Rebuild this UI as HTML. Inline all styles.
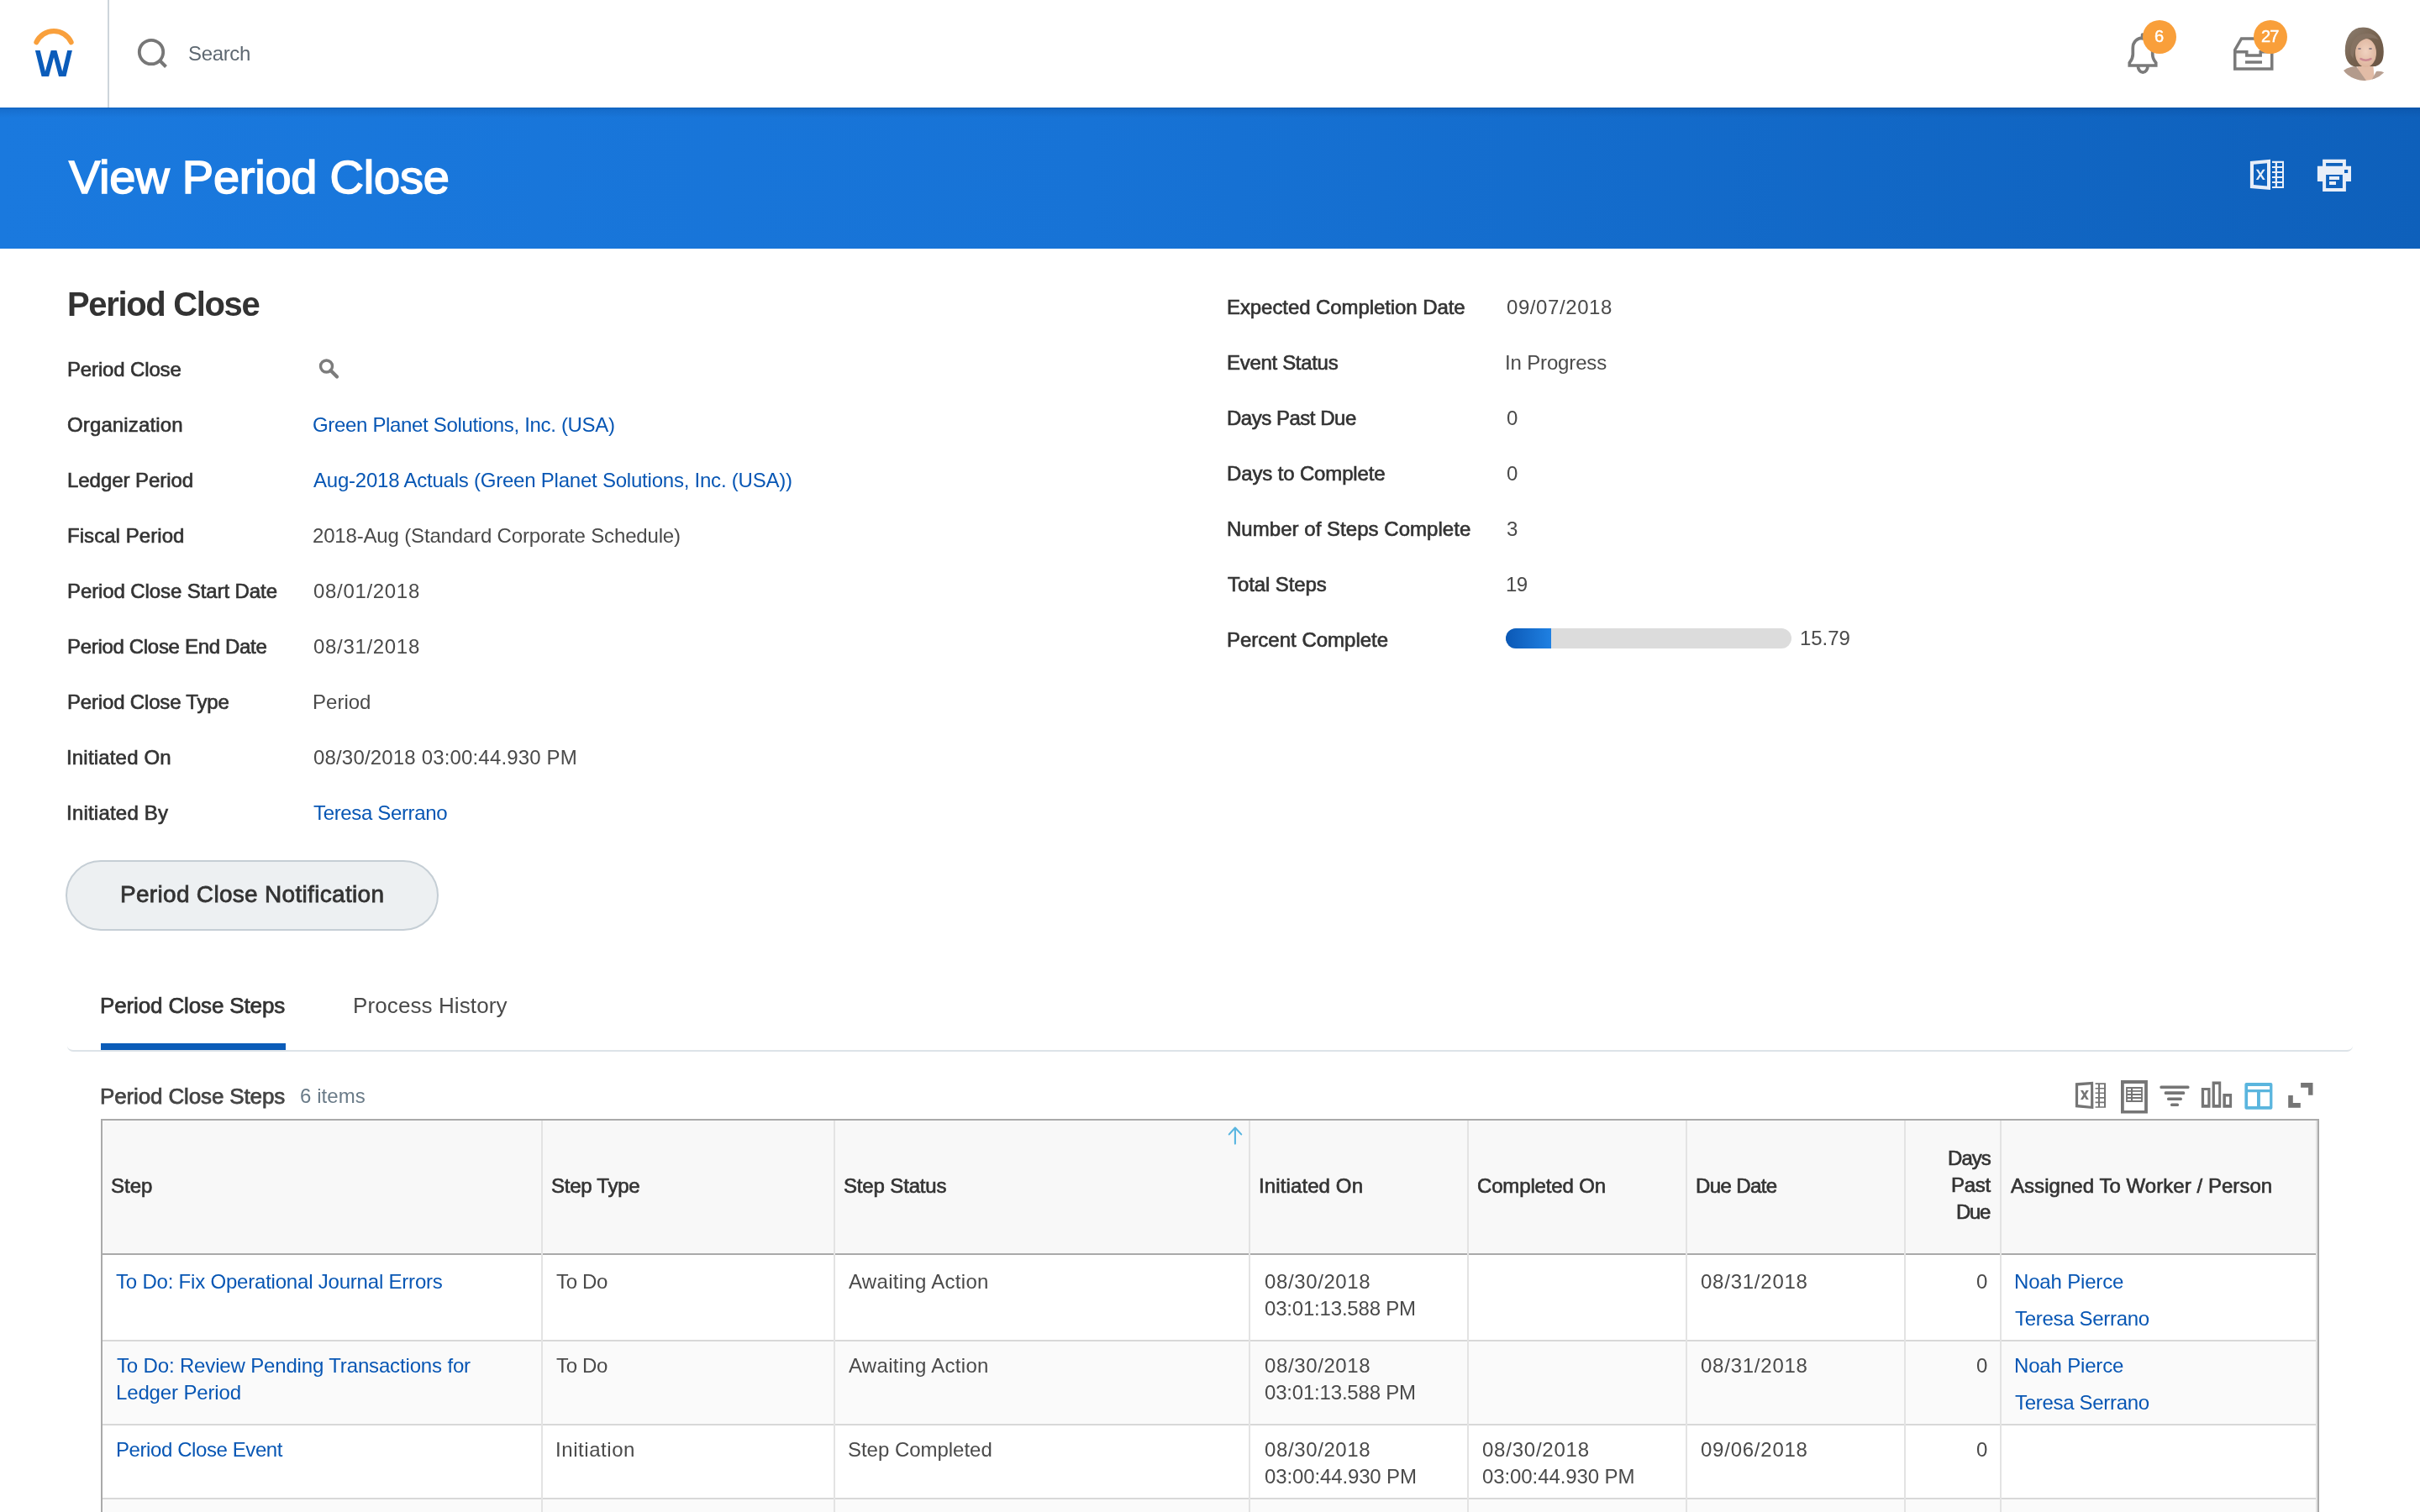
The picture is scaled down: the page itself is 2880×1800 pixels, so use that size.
<!DOCTYPE html>
<html><head><meta charset="utf-8"><title>View Period Close</title>
<style>
html,body{margin:0;padding:0;}
body{width:2880px;height:1800px;position:relative;overflow:hidden;background:#fff;font-family:"Liberation Sans",sans-serif;}
.t{position:absolute;white-space:nowrap;will-change:transform;}
svg{position:absolute;}
</style></head><body>
<svg style="left:0;top:0" width="130" height="128" viewBox="0 0 130 128"><path d="M43.3 50.3 A22.75 22.75 0 0 1 84.7 50.3" fill="none" stroke="#f9a03c" stroke-width="6" stroke-linecap="round"/><path d="M41.9 60 L47.7 60 L53.9 85 L60.7 60 L67.4 60 L74.2 85 L80.2 60 L85.9 60 L78.5 91 L70 91 L64.05 68.3 L58.1 91 L49.6 91 Z" fill="#0b5cba"/></svg>
<div style="position:absolute;left:128px;top:0px;width:2px;height:128px;background:#cdd5db;"></div>
<svg style="left:160px;top:42px" width="44" height="44" viewBox="0 0 44 44"><circle cx="20" cy="20" r="14.2" fill="none" stroke="#777" stroke-width="3.8"/><path d="M30 30 L37.5 37.5" stroke="#777" stroke-width="4"/></svg>
<div class="t" style="left:223.60px;top:51.68px;font-size:24px;line-height:24px;color:#5e6871;letter-spacing:-0.339px;">Search</div>
<svg style="left:2528px;top:36px" width="48" height="56" viewBox="0 0 48 56"><path d="M22 9.2 C15 9.2 10.3 14 10.3 21 L10.3 28.5 C10.3 34 8.5 36 6.3 38.6 L6.3 42 L37.7 42 L37.7 38.6 C35.5 36 33.7 34 33.7 28.5 L33.7 21 C33.7 14 29 9.2 22 9.2 Z" fill="none" stroke="#7a7a7a" stroke-width="3.7"/><path d="M16.4 42.5 A5.8 7.6 0 0 0 28 42.5" fill="none" stroke="#7a7a7a" stroke-width="3.7"/><path d="M22 9.5 V5.5" fill="none" stroke="#7a7a7a" stroke-width="4.4" stroke-linecap="round"/></svg>
<svg style="left:2654px;top:40px" width="56" height="48" viewBox="0 0 56 48"><path d="M5.75 42 L5.75 19.5 L13.5 6 L42 6 L49.75 19.5 L49.75 42 Z" fill="none" stroke="#7a7a7a" stroke-width="3.5"/><path d="M5.75 21.8 L19.8 21.8 L19.8 26 L36.2 26 L36.2 21.8 L49.75 21.8" fill="none" stroke="#7a7a7a" stroke-width="3.5"/><path d="M18 34 L38 34" stroke="#7a7a7a" stroke-width="3.5"/></svg>
<div style="position:absolute;left:2550px;top:24px;width:40px;height:40px;background:#f99f3a;border-radius:50%;"></div>
<div style="position:absolute;left:2682px;top:24px;width:40px;height:40px;background:#f99f3a;border-radius:50%;"></div>
<div class="t" style="left:2564.45px;top:33.07px;font-size:20px;line-height:20px;color:#fff;-webkit-text-stroke:0.5px #fff;">6</div>
<div class="t" style="left:2690.75px;top:33.07px;font-size:20px;line-height:20px;color:#fff;letter-spacing:-0.823px;-webkit-text-stroke:0.5px #fff;">27</div>
<svg style="left:2782px;top:32px" width="64" height="64" viewBox="0 0 64 64"><defs><clipPath id="av"><circle cx="32" cy="32" r="32"/></clipPath><linearGradient id="hg" x1="0" y1="0" x2="1" y2="1"><stop offset="0" stop-color="#8d7f72"/><stop offset="0.5" stop-color="#76624f"/><stop offset="1" stop-color="#6a5544"/></linearGradient><radialGradient id="fg" cx="0.5" cy="0.45" r="0.6"><stop offset="0" stop-color="#f0d2c0"/><stop offset="1" stop-color="#dcb29a"/></radialGradient></defs><g clip-path="url(#av)"><path d="M24 42 L42 42 L44 64 L22 64 Z" fill="#e2bca6"/><path d="M0 64 L3 56 C8 50 15 47 22 47 L34 64 Z" fill="#b39b8c"/><path d="M64 64 L61 58 C57 54 51 52 46 53 L40 64 Z" fill="#b9a193"/><path d="M30 0.5 C17 0.5 8.5 12 8.8 29 C9 36 11 42 16 45.5 C19 47.5 22 48 25 47 L45 47 C50 45.5 53 42 54 37 C55.5 30 55 20 50.5 12 C46 5 39 0.5 30 0.5 Z" fill="url(#hg)"/><ellipse cx="33.5" cy="31" rx="12.5" ry="17" fill="url(#fg)"/><path d="M15.5 33 C14.5 21 20 9.5 32 8 C39 7 45 9.5 48.5 15 C41 12 33 13 27.5 17 C22.5 21 19.5 27 18.5 38 Z" fill="#857262"/><ellipse cx="26" cy="26" rx="2" ry="1.1" fill="#8a7a82"/><ellipse cx="39" cy="26" rx="2" ry="1.1" fill="#8a7a82"/><path d="M27.5 38 C30.5 40.3 36.5 40.3 39.5 38" stroke="#cc8a92" stroke-width="2.6" fill="none" stroke-linecap="round"/></g></svg>
<div style="position:absolute;left:0px;top:128px;width:2880px;height:168px;background:linear-gradient(90deg,#1a79de 0%,#1773d6 45%,#0e60bb 100%);"></div>
<div style="position:absolute;left:0px;top:128px;width:2880px;height:2px;background:rgba(0,50,120,0.22);"></div>
<div style="position:absolute;left:0px;top:130px;width:2880px;height:10px;background:linear-gradient(180deg,rgba(0,40,100,0.13),rgba(0,40,100,0));"></div>
<div class="t" style="left:81.50px;top:182.80px;font-size:56px;line-height:56px;color:#ffffff;letter-spacing:-0.230px;-webkit-text-stroke:1.6px #ffffff;">View Period Close</div>
<svg style="left:2670px;top:180px" width="140" height="56" viewBox="0 0 140 56" fill="#e8eef8"><path fill-rule="evenodd" d="M7.9 12.1 L32 9.8 L32 46 L7.9 43.9 Z M12 15.8 L12 40.1 L28 41.6 L28 14.3 Z"/><path d="M14.8 21.7 L17.5 21.7 L20.2 26 L22.9 21.7 L25.7 21.7 L21.6 27.8 L25.7 34 L22.9 34 L20.2 29.7 L17.5 34 L14.8 34 L18.8 27.8 Z"/><path d="M34 11.8 H48 V44.1 H34 V41.9 H37.7 V38 H34 V36 H37.7 V32 H34 V30 H37.7 V26 H34 V24 H37.7 V20.1 H34 V18.1 H37.7 V14.1 H34 Z M40 14.1 V18.1 H46 V14.1 Z M40 20.1 V24 H46 V20.1 Z M40 26 V30 H46 V26 Z M40 32 V36 H46 V32 Z M40 38 V41.9 H46 V38 Z" fill-rule="evenodd"/><path fill-rule="evenodd" d="M94.1 9.8 H121.9 V17.8 H128 V36 H121.9 V48 H94.1 V36 H87.9 V17.8 H94.1 Z M98.1 14.1 V17.8 H117.9 V14.1 Z M120 22 V26 H124.2 V22 Z M98.1 28 V43.9 H117.9 V28 Z"/><rect x="102" y="30" width="12" height="4"/><rect x="102" y="36" width="8" height="4"/></svg>
<div class="t" style="left:79.50px;top:342.14px;font-size:40px;line-height:40px;color:#333;font-weight:700;letter-spacing:-1.342px;">Period Close</div>
<div class="t" style="left:80.03px;top:428.18px;font-size:24px;line-height:24px;color:#333333;letter-spacing:-0.146px;-webkit-text-stroke:0.65px #333333;">Period Close</div>
<div class="t" style="left:80.03px;top:494.18px;font-size:24px;line-height:24px;color:#333333;letter-spacing:0.129px;-webkit-text-stroke:0.65px #333333;">Organization</div>
<div class="t" style="left:80.03px;top:560.18px;font-size:24px;line-height:24px;color:#333333;letter-spacing:-0.048px;-webkit-text-stroke:0.65px #333333;">Ledger Period</div>
<div class="t" style="left:80.03px;top:626.18px;font-size:24px;line-height:24px;color:#333333;letter-spacing:0.057px;-webkit-text-stroke:0.65px #333333;">Fiscal Period</div>
<div class="t" style="left:80.03px;top:692.18px;font-size:24px;line-height:24px;color:#333333;letter-spacing:-0.096px;-webkit-text-stroke:0.65px #333333;">Period Close Start Date</div>
<div class="t" style="left:80.03px;top:758.18px;font-size:24px;line-height:24px;color:#333333;letter-spacing:-0.317px;-webkit-text-stroke:0.65px #333333;">Period Close End Date</div>
<div class="t" style="left:80.03px;top:824.18px;font-size:24px;line-height:24px;color:#333333;letter-spacing:-0.175px;-webkit-text-stroke:0.65px #333333;">Period Close Type</div>
<div class="t" style="left:79.03px;top:890.18px;font-size:24px;line-height:24px;color:#333333;letter-spacing:0.178px;-webkit-text-stroke:0.65px #333333;">Initiated On</div>
<div class="t" style="left:79.03px;top:956.18px;font-size:24px;line-height:24px;color:#333333;letter-spacing:0.211px;-webkit-text-stroke:0.65px #333333;">Initiated By</div>
<div class="t" style="left:371.70px;top:494.18px;font-size:24px;line-height:24px;color:#0756b4;letter-spacing:-0.332px;">Green Planet Solutions, Inc. (USA)</div>
<div class="t" style="left:372.70px;top:560.18px;font-size:24px;line-height:24px;color:#0756b4;letter-spacing:-0.224px;">Aug-2018 Actuals (Green Planet Solutions, Inc. (USA))</div>
<div class="t" style="left:371.70px;top:626.18px;font-size:24px;line-height:24px;color:#4a4a4a;letter-spacing:-0.170px;">2018-Aug (Standard Corporate Schedule)</div>
<div class="t" style="left:372.70px;top:692.18px;font-size:24px;line-height:24px;color:#4a4a4a;letter-spacing:0.681px;">08/01/2018</div>
<div class="t" style="left:372.70px;top:758.18px;font-size:24px;line-height:24px;color:#4a4a4a;letter-spacing:0.681px;">08/31/2018</div>
<div class="t" style="left:371.70px;top:824.18px;font-size:24px;line-height:24px;color:#4a4a4a;letter-spacing:0.015px;">Period</div>
<div class="t" style="left:372.70px;top:890.18px;font-size:24px;line-height:24px;color:#4a4a4a;letter-spacing:0.168px;">08/30/2018 03:00:44.930 PM</div>
<div class="t" style="left:372.70px;top:956.18px;font-size:24px;line-height:24px;color:#0756b4;letter-spacing:-0.349px;">Teresa Serrano</div>
<svg style="left:376px;top:424px" width="32" height="32" viewBox="0 0 32 32"><circle cx="12.5" cy="12" r="7" fill="none" stroke="#7c7c7c" stroke-width="3.4"/><path d="M17.5 17 L25 24.5" stroke="#7c7c7c" stroke-width="4.2" stroke-linecap="round"/></svg>
<div class="t" style="left:1460.23px;top:353.98px;font-size:24px;line-height:24px;color:#333333;letter-spacing:-0.082px;-webkit-text-stroke:0.65px #333333;">Expected Completion Date</div>
<div class="t" style="left:1793.00px;top:353.98px;font-size:24px;line-height:24px;color:#4a4a4a;letter-spacing:0.581px;">09/07/2018</div>
<div class="t" style="left:1460.23px;top:420.08px;font-size:24px;line-height:24px;color:#333333;letter-spacing:-0.312px;-webkit-text-stroke:0.65px #333333;">Event Status</div>
<div class="t" style="left:1791.00px;top:420.08px;font-size:24px;line-height:24px;color:#4a4a4a;letter-spacing:-0.152px;">In Progress</div>
<div class="t" style="left:1460.23px;top:485.98px;font-size:24px;line-height:24px;color:#333333;letter-spacing:-0.481px;-webkit-text-stroke:0.65px #333333;">Days Past Due</div>
<div class="t" style="left:1793.00px;top:485.98px;font-size:24px;line-height:24px;color:#4a4a4a;">0</div>
<div class="t" style="left:1460.23px;top:552.08px;font-size:24px;line-height:24px;color:#333333;letter-spacing:-0.143px;-webkit-text-stroke:0.65px #333333;">Days to Complete</div>
<div class="t" style="left:1793.00px;top:552.08px;font-size:24px;line-height:24px;color:#4a4a4a;">0</div>
<div class="t" style="left:1460.23px;top:618.18px;font-size:24px;line-height:24px;color:#333333;letter-spacing:0.036px;-webkit-text-stroke:0.65px #333333;">Number of Steps Complete</div>
<div class="t" style="left:1793.00px;top:618.18px;font-size:24px;line-height:24px;color:#4a4a4a;">3</div>
<div class="t" style="left:1461.23px;top:683.98px;font-size:24px;line-height:24px;color:#333333;letter-spacing:-0.088px;-webkit-text-stroke:0.65px #333333;">Total Steps</div>
<div class="t" style="left:1792.00px;top:683.98px;font-size:24px;line-height:24px;color:#4a4a4a;letter-spacing:-0.548px;">19</div>
<div class="t" style="left:1460.23px;top:750.28px;font-size:24px;line-height:24px;color:#333333;-webkit-text-stroke:0.65px #333333;">Percent Complete</div>
<div style="position:absolute;left:1792px;top:748px;width:339.5px;height:24px;background:#dcdcdc;border-radius:12px;"></div>
<div style="position:absolute;left:1792px;top:748px;width:54px;height:24px;background:linear-gradient(90deg,#0b58b5,#1f80e2);border-radius:12px 0 0 12px;"></div>
<div class="t" style="left:2141.60px;top:748.28px;font-size:24px;line-height:24px;color:#4a4a4a;letter-spacing:-0.078px;">15.79</div>
<div style="position:absolute;left:78px;top:1024px;width:444px;height:84px;background:#edf0f2;border:2px solid #c5ced5;border-radius:42px;box-sizing:border-box;"></div>
<div class="t" style="left:143.00px;top:1051.00px;font-size:28px;line-height:28px;color:#333;letter-spacing:0.308px;-webkit-text-stroke:0.8px #333;">Period Close Notification</div>
<div class="t" style="left:119.38px;top:1183.99px;font-size:26px;line-height:26px;color:#333;letter-spacing:-0.136px;-webkit-text-stroke:0.75px #333;">Period Close Steps</div>
<div class="t" style="left:419.80px;top:1183.99px;font-size:26px;line-height:26px;color:#4a4a4a;letter-spacing:0.104px;">Process History</div>
<div style="position:absolute;left:80px;top:1240px;width:2720px;height:12px;background:transparent;box-sizing:border-box;border-bottom:2px solid #dde3e8;border-radius:0 0 7px 7px;"></div>
<div style="position:absolute;left:120px;top:1242px;width:220px;height:8px;background:#0b5cb8;"></div>
<div class="t" style="left:119.38px;top:1291.79px;font-size:26px;line-height:26px;color:#444;letter-spacing:-0.136px;-webkit-text-stroke:0.75px #444;">Period Close Steps</div>
<div class="t" style="left:356.90px;top:1293.48px;font-size:24px;line-height:24px;color:#6a7b88;letter-spacing:0.074px;">6 items</div>
<svg style="left:2460px;top:1280px" width="300" height="50" viewBox="0 0 300 50" fill="#757575"><path fill-rule="evenodd" d="M9.9 9.3 L31.1 7.8 L31.4 40 L9.9 38.3 Z M13.1 12.6 L13.1 35 L28.1 36.7 L28.1 11.2 Z"/><path d="M15.9 17.9 L19 17.9 L20.85 21.3 L22.7 17.9 L25.8 17.9 L22.4 23.5 L25.8 29.1 L22.7 29.1 L20.85 25.7 L19 29.1 L15.9 29.1 L19.3 23.5 Z"/><path fill-rule="evenodd" d="M33.6 9.3 H46 V38.7 H33.6 V37.2 H37 V33.3 H33.6 V31.6 H37 V27.8 H33.6 V26.1 H37 V22.1 H33.6 V20.5 H37 V16.5 H33.6 V14.9 H37 V10.9 H33.6 Z M39 10.9 V14.9 H44 V10.9 Z M39 16.5 V20.5 H44 V16.5 Z M39 22.1 V26.1 H44 V22.1 Z M39 27.8 V31.6 H44 V27.8 Z M39 33.3 V37.2 H44 V33.3 Z"/><path fill-rule="evenodd" d="M64 6 H95.9 V45.6 H64 Z M67.8 9.9 V42 H92.1 V9.9 Z"/><path fill-rule="evenodd" d="M70.1 14 H89.9 V31.9 H70.1 Z M71.9 15.9 V18 H76 V15.9 Z M78 15.9 V18 H88.1 V15.9 Z M71.9 19.8 V22 H76 V19.8 Z M78 19.8 V22 H88.1 V19.8 Z M71.9 23.9 V26 H76 V23.9 Z M78 23.9 V26 H88.1 V23.9 Z M71.9 27.9 V30.1 H76 V27.9 Z M78 27.9 V30.1 H88.1 V27.9 Z"/><rect x="110.4" y="12.4" width="35.1" height="3.5" rx="1.5"/><rect x="115.7" y="19.3" width="24.5" height="3.6" rx="1.5"/><rect x="119" y="26.4" width="17.9" height="3.5" rx="1.5"/><rect x="123" y="33.6" width="10" height="3.3" rx="1.5"/><path fill-rule="evenodd" d="M159.8 14.9 H170.5 V38.7 H159.8 Z M163.1 17.9 V35 H167.3 V17.9 Z"/><path fill-rule="evenodd" d="M172.6 7.6 H183.2 V38.7 H172.6 Z M175.9 10.9 V35 H180.2 V10.9 Z"/><path fill-rule="evenodd" d="M185.4 22.1 H196.1 V38.7 H185.4 Z M188.9 25.5 V35 H193.1 V25.5 Z"/><path fill="#5ab5de" fill-rule="evenodd" d="M213.4 8.9 H242.4 Q244.4 8.9 244.4 10.9 V38.7 Q244.4 40.7 242.4 40.7 H213.4 Q211.4 40.7 211.4 38.7 V10.9 Q211.4 8.9 213.4 8.9 Z M215.1 12.9 V16.9 H241.1 V12.9 Z M215.1 20.2 V36.9 H226 V20.2 Z M229.9 20.2 V36.9 H241.1 V20.2 Z"/><path d="M278.1 9.1 H292.5 V23.8 H287.1 V14.7 H278.1 Z"/><path d="M263.2 23.9 H268.8 V33.1 H277.8 V38.7 H263.2 Z"/></svg>
<div style="position:absolute;left:120px;top:1332px;width:2639.5px;height:468px;background:#fff;"></div>
<div style="position:absolute;left:122px;top:1334px;width:2635.5px;height:158px;background:#f8f8f8;"></div>
<div style="position:absolute;left:122px;top:1596.5px;width:2635.5px;height:98px;background:#fafafa;"></div>
<div style="position:absolute;left:122px;top:1784.5px;width:2635.5px;height:20px;background:#fafafa;"></div>
<div style="position:absolute;left:120px;top:1332px;width:2639.5px;height:2px;background:#aaaaaa;"></div>
<div style="position:absolute;left:120px;top:1332px;width:2px;height:468px;background:#aaaaaa;"></div>
<div style="position:absolute;left:2757.5px;top:1332px;width:2px;height:468px;background:#aaaaaa;"></div>
<div style="position:absolute;left:120px;top:1492px;width:2639.5px;height:2px;background:#aaaaaa;"></div>
<div style="position:absolute;left:122px;top:1594.5px;width:2635.5px;height:2px;background:#d8d8d8;"></div>
<div style="position:absolute;left:122px;top:1694.5px;width:2635.5px;height:2px;background:#d8d8d8;"></div>
<div style="position:absolute;left:122px;top:1782.5px;width:2635.5px;height:2px;background:#d8d8d8;"></div>
<div style="position:absolute;left:644px;top:1334px;width:2px;height:468px;background:#e3e3e3;"></div>
<div style="position:absolute;left:992px;top:1334px;width:2px;height:468px;background:#e3e3e3;"></div>
<div style="position:absolute;left:1486px;top:1334px;width:2px;height:468px;background:#e3e3e3;"></div>
<div style="position:absolute;left:1746px;top:1334px;width:2px;height:468px;background:#e3e3e3;"></div>
<div style="position:absolute;left:2006px;top:1334px;width:2px;height:468px;background:#e3e3e3;"></div>
<div style="position:absolute;left:2266px;top:1334px;width:2px;height:468px;background:#e3e3e3;"></div>
<div style="position:absolute;left:2380px;top:1334px;width:2px;height:468px;background:#e3e3e3;"></div>
<div style="position:absolute;left:2756px;top:1334px;width:2px;height:468px;background:#e3e3e3;"></div>
<svg style="left:1460px;top:1338px" width="20" height="26" viewBox="0 0 20 26"><path d="M9.9 5 V23.6 M2.8 12.4 L9.9 4.5 L17.2 12.4" fill="none" stroke="#58b5e0" stroke-width="2.1" stroke-linecap="round" stroke-linejoin="round"/></svg>
<div class="t" style="left:132.12px;top:1399.68px;font-size:24px;line-height:24px;color:#333;-webkit-text-stroke:0.65px #333;">Step</div>
<div class="t" style="left:656.23px;top:1399.68px;font-size:24px;line-height:24px;color:#333;letter-spacing:-0.259px;-webkit-text-stroke:0.65px #333;">Step Type</div>
<div class="t" style="left:1004.33px;top:1399.68px;font-size:24px;line-height:24px;color:#333;letter-spacing:-0.153px;-webkit-text-stroke:0.65px #333;">Step Status</div>
<div class="t" style="left:1497.73px;top:1399.68px;font-size:24px;line-height:24px;color:#333;letter-spacing:0.114px;-webkit-text-stroke:0.65px #333;">Initiated On</div>
<div class="t" style="left:1758.33px;top:1399.68px;font-size:24px;line-height:24px;color:#333;letter-spacing:-0.159px;-webkit-text-stroke:0.65px #333;">Completed On</div>
<div class="t" style="left:2018.12px;top:1399.68px;font-size:24px;line-height:24px;color:#333;letter-spacing:-0.599px;-webkit-text-stroke:0.65px #333;">Due Date</div>
<div class="t" style="left:2392.92px;top:1399.68px;font-size:24px;line-height:24px;color:#333;letter-spacing:0.048px;-webkit-text-stroke:0.65px #333;">Assigned To Worker / Person</div>
<div class="t" style="left:2317.52px;top:1367.28px;font-size:24px;line-height:24px;color:#333;letter-spacing:-0.943px;-webkit-text-stroke:0.65px #333;">Days</div>
<div class="t" style="left:2321.82px;top:1399.18px;font-size:24px;line-height:24px;color:#333;letter-spacing:-0.268px;-webkit-text-stroke:0.65px #333;">Past</div>
<div class="t" style="left:2328.42px;top:1430.98px;font-size:24px;line-height:24px;color:#333;letter-spacing:-1.365px;-webkit-text-stroke:0.65px #333;">Due</div>
<div class="t" style="left:138.20px;top:1513.68px;font-size:24px;line-height:24px;color:#0756b4;letter-spacing:-0.204px;">To Do: Fix Operational Journal Errors</div>
<div class="t" style="left:662.30px;top:1513.68px;font-size:24px;line-height:24px;color:#4a4a4a;letter-spacing:-0.337px;">To Do</div>
<div class="t" style="left:1010.10px;top:1513.68px;font-size:24px;line-height:24px;color:#4a4a4a;letter-spacing:0.293px;">Awaiting Action</div>
<div class="t" style="left:1504.80px;top:1513.68px;font-size:24px;line-height:24px;color:#4a4a4a;letter-spacing:0.614px;">08/30/2018</div>
<div class="t" style="left:1504.80px;top:1545.68px;font-size:24px;line-height:24px;color:#4a4a4a;letter-spacing:-0.193px;">03:01:13.588 PM</div>
<div class="t" style="left:2024.40px;top:1513.68px;font-size:24px;line-height:24px;color:#4a4a4a;letter-spacing:0.759px;">08/31/2018</div>
<div class="t" style="left:2351.50px;top:1513.68px;font-size:24px;line-height:24px;color:#4a4a4a;">0</div>
<div class="t" style="left:2397.00px;top:1513.68px;font-size:24px;line-height:24px;color:#0756b4;letter-spacing:-0.172px;">Noah Pierce</div>
<div class="t" style="left:2398.00px;top:1558.18px;font-size:24px;line-height:24px;color:#0756b4;letter-spacing:-0.303px;">Teresa Serrano</div>
<div class="t" style="left:139.10px;top:1613.68px;font-size:24px;line-height:24px;color:#0756b4;letter-spacing:-0.157px;">To Do: Review Pending Transactions for</div>
<div class="t" style="left:138.10px;top:1645.68px;font-size:24px;line-height:24px;color:#0756b4;letter-spacing:-0.144px;">Ledger Period</div>
<div class="t" style="left:662.30px;top:1613.68px;font-size:24px;line-height:24px;color:#4a4a4a;letter-spacing:-0.337px;">To Do</div>
<div class="t" style="left:1010.10px;top:1613.68px;font-size:24px;line-height:24px;color:#4a4a4a;letter-spacing:0.293px;">Awaiting Action</div>
<div class="t" style="left:1504.80px;top:1613.68px;font-size:24px;line-height:24px;color:#4a4a4a;letter-spacing:0.614px;">08/30/2018</div>
<div class="t" style="left:1504.80px;top:1645.68px;font-size:24px;line-height:24px;color:#4a4a4a;letter-spacing:-0.193px;">03:01:13.588 PM</div>
<div class="t" style="left:2024.40px;top:1613.68px;font-size:24px;line-height:24px;color:#4a4a4a;letter-spacing:0.759px;">08/31/2018</div>
<div class="t" style="left:2351.50px;top:1613.68px;font-size:24px;line-height:24px;color:#4a4a4a;">0</div>
<div class="t" style="left:2397.00px;top:1613.68px;font-size:24px;line-height:24px;color:#0756b4;letter-spacing:-0.172px;">Noah Pierce</div>
<div class="t" style="left:2398.00px;top:1658.18px;font-size:24px;line-height:24px;color:#0756b4;letter-spacing:-0.303px;">Teresa Serrano</div>
<div class="t" style="left:138.10px;top:1714.08px;font-size:24px;line-height:24px;color:#0756b4;letter-spacing:-0.410px;">Period Close Event</div>
<div class="t" style="left:661.10px;top:1714.08px;font-size:24px;line-height:24px;color:#4a4a4a;letter-spacing:0.562px;">Initiation</div>
<div class="t" style="left:1009.10px;top:1714.08px;font-size:24px;line-height:24px;color:#4a4a4a;letter-spacing:-0.027px;">Step Completed</div>
<div class="t" style="left:1504.80px;top:1714.08px;font-size:24px;line-height:24px;color:#4a4a4a;letter-spacing:0.614px;">08/30/2018</div>
<div class="t" style="left:1504.80px;top:1746.08px;font-size:24px;line-height:24px;color:#4a4a4a;letter-spacing:-0.129px;">03:00:44.930 PM</div>
<div class="t" style="left:1764.00px;top:1714.08px;font-size:24px;line-height:24px;color:#4a4a4a;letter-spacing:0.770px;">08/30/2018</div>
<div class="t" style="left:1764.00px;top:1746.08px;font-size:24px;line-height:24px;color:#4a4a4a;letter-spacing:-0.093px;">03:00:44.930 PM</div>
<div class="t" style="left:2024.40px;top:1714.08px;font-size:24px;line-height:24px;color:#4a4a4a;letter-spacing:0.759px;">09/06/2018</div>
<div class="t" style="left:2351.50px;top:1714.08px;font-size:24px;line-height:24px;color:#4a4a4a;">0</div>
</body></html>
